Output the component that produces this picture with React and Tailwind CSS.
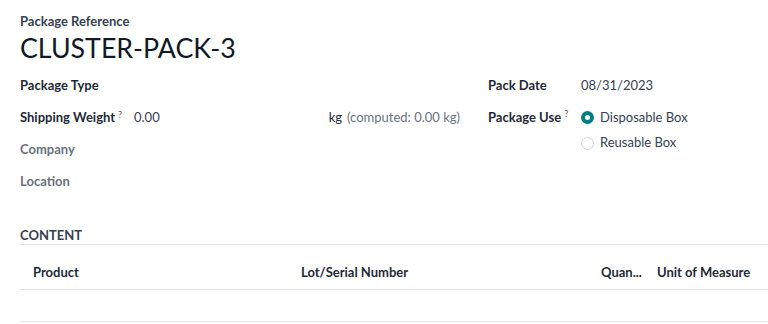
export default function App() {
  return (
    <div className="w-[768px] h-[324px] bg-white overflow-hidden text-[#374151] font-['Lato',sans-serif] text-[13px]">
      <div className="pt-[12px] pl-[20px]">
        <div className="text-[13px] leading-[18px] font-bold text-[#374151]">Package Reference</div>
        <div className="text-[26.75px] leading-[36px] text-[#111827]">CLUSTER-PACK-3</div>

        <div className="mt-[4px] flex">
          <div className="w-[440px]">
            <div className="h-[32px] flex items-center">
              <div className="w-[114px] font-bold text-[#1f2937]">Package Type</div>
            </div>
            <div className="h-[32px] flex items-center">
              <div className="w-[114px] font-bold text-[#1f2937]">
                Shipping Weight<sup className="ml-[3px] text-[9px] font-normal text-[#4b5563]">?</sup>
              </div>
              <div className="flex-1 flex items-center">
                <span>0.00</span>
                <span className="ml-auto text-[#1f2937]">kg</span>
                <span className="ml-[5px] text-[#6b7280]">(computed: 0.00 kg)</span>
              </div>
            </div>
            <div className="h-[32px] flex items-center">
              <div className="w-[114px] font-bold text-[#6b7280]">Company</div>
            </div>
            <div className="h-[32px] flex items-center">
              <div className="w-[114px] font-bold text-[#6b7280]">Location</div>
            </div>
          </div>
          <div className="ml-[28px] flex-1">
            <div className="h-[32px] flex items-center">
              <div className="w-[93px] font-bold text-[#1f2937]">Pack Date</div>
              <div>08/31/2023</div>
            </div>
            <div className="h-[31px] flex items-center">
              <div className="w-[93px] font-bold text-[#1f2937]">
                Package Use<sup className="ml-[3px] text-[9px] font-normal text-[#4b5563]">?</sup>
              </div>
              <div className="flex items-center gap-[6px]">
                <span className="w-[13px] h-[13px] rounded-full border-[4px] border-[#017e84] bg-white"></span>
                <span>Disposable Box</span>
              </div>
            </div>
            <div className="h-[20px] flex items-center">
              <div className="w-[93px]"></div>
              <div className="flex items-center gap-[6px]">
                <span className="w-[13px] h-[13px] rounded-full border border-[#d1d5db] bg-white"></span>
                <span>Reusable Box</span>
              </div>
            </div>
          </div>
        </div>

        <div className="mt-[28px] border-b border-[#e5e7eb]">
          <div className="leading-[18px] font-bold text-[#374151]">CONTENT</div>
        </div>

        <div className="mt-[12px] flex h-[33px] items-center border-b border-[#dee2e6] font-bold text-[#1f2937]">
          <div className="w-[268px] pl-[13px]">Product</div>
          <div className="w-[300px] pl-[13px]">Lot/Serial Number</div>
          <div className="w-[56px] pl-[13px] truncate">Quan...</div>
          <div className="flex-1 pl-[13px]">Unit of Measure</div>
        </div>
        <div className="h-[32px] border-b border-[#e5e7eb]"></div>
      </div>
    </div>
  );
}
